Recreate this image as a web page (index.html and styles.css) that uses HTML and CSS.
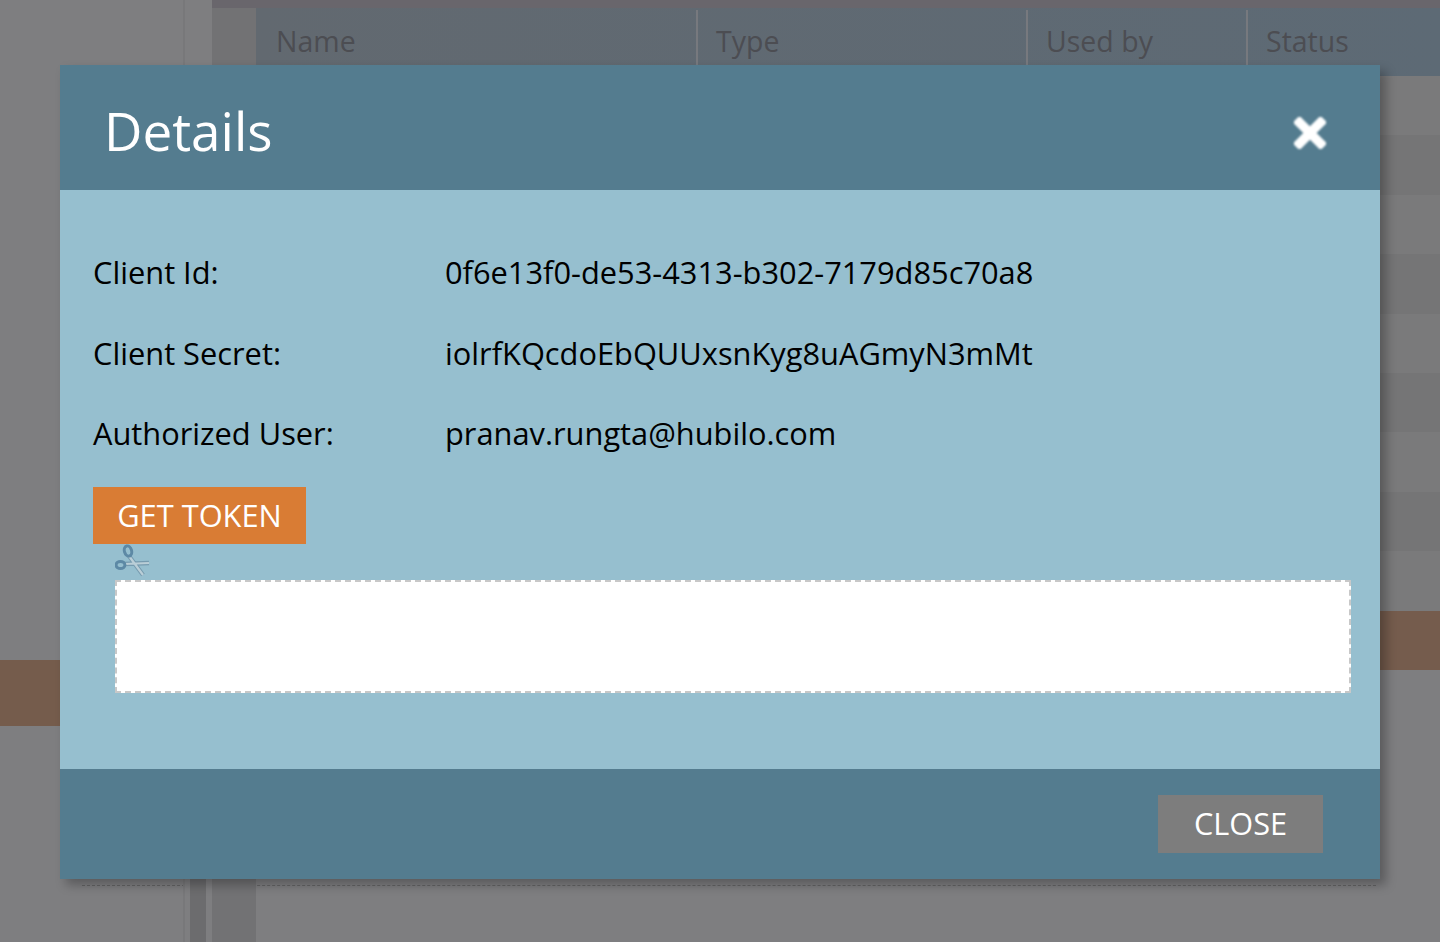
FILE: index.html
```html
<!DOCTYPE html>
<html lang="en">
<head>
<meta charset="utf-8">
<title>Details</title>
<link rel="stylesheet" href="styles.css">
</head>
<body>
<div class="page">
  <aside class="sidebar"><div class="sidebar-highlight"></div></aside>
  <div class="rail"><div class="rail-stripe"></div></div>
  <div class="gutter"></div>
  <main class="main">
    <div class="topbar"></div>
    <div class="table-head">
      <div class="th th-name">Name</div>
      <div class="th th-type">Type</div>
      <div class="th th-used">Used by</div>
      <div class="th th-status">Status</div>
    </div>
    <div class="rows">
      <div class="row"></div><div class="row alt"></div><div class="row"></div><div class="row alt"></div><div class="row"></div><div class="row alt"></div><div class="row"></div><div class="row alt"></div><div class="row"></div>
      <div class="row selected"></div>
    </div>
  </main>
</div>
<section class="modal">
  <header class="modal-head">
    <h1 class="modal-title">Details</h1>
    <svg class="close-icon" viewBox="0 0 32 32" aria-hidden="true"><path d="M5.5 5.5 26.5 26.5M26.5 5.5 5.5 26.5"/></svg>
  </header>
  <div class="modal-body">
    <dl class="info">
      <dt>Client Id:</dt><dd>0f6e13f0-de53-4313-b302-7179d85c70a8</dd>
      <dt>Client Secret:</dt><dd>iolrfKQcdoEbQUUxsnKyg8uAGmyN3mMt</dd>
      <dt>Authorized User:</dt><dd>pranav.rungta@hubilo.com</dd>
    </dl>
    <button class="btn-token" type="button">GET TOKEN</button>
    <svg class="scissors" viewBox="0 0 36 36" aria-hidden="true">
      <path class="blade" d="M14 12 28 31M9 20 34 19"/>
      <path class="blade-in" d="M14 12 28 31M9 20 34 19"/>
      <ellipse class="ring" cx="13" cy="7" rx="3.6" ry="5.2" transform="rotate(-15 13 7)"/>
      <ellipse class="ring" cx="5.5" cy="21" rx="4.4" ry="3.6"/>
    </svg>
    <div class="token-box"></div>
  </div>
  <footer class="modal-foot">
    <button class="btn-close" type="button">CLOSE</button>
  </footer>
</section>
</body>
</html>
```
FILE: styles.css
```css
* { box-sizing: border-box; }
html, body { margin: 0; height: 100%; }
body {
  width: 1440px;
  height: 942px;
  overflow: hidden;
  background: #7e7e80;
  font-family: "Open Sans", "Noto Sans", sans-serif;
  position: relative;
}
.page { display: flex; height: 942px; }
.sidebar {
  width: 183px;
  padding-top: 660px;
  flex: none;
}
.sidebar-highlight { height: 66px; background: #755c4c; }
.rail {
  width: 29px;
  flex: none;
  border-left: 2px solid #78787a;
  background: #7e7e80;
  padding: 800px 6px 0 5px;
}
.rail-stripe { height: 142px; background: #6c6c6e; }
.gutter { width: 44px; flex: none; background: #727274; }
.main { flex: 1; min-width: 0; }
.topbar { height: 8px; background: #69666c; margin-left: -44px; }
.table-head {
  display: grid;
  grid-template-columns: 440px 330px 220px 1fr;
  height: 68px;
  background: linear-gradient(90deg, #626970, #5d6a75);
  color: #4c4d52;
  font-size: 28.5px;
}
.th { margin-top: 2px; line-height: 62px; }
.th-name { padding-left: 20px; }
.th-type, .th-used, .th-status { border-left: 2px solid #77797e; padding-left: 18px; }
.rows { display: grid; grid-template-rows: repeat(10, 59.4px); }
.row { background: #7a7a7b; }
.row.alt { background: #757576; }
.row.selected { background: #755c4d; }

.modal {
  position: absolute;
  left: 60px;
  top: 65px;
  width: 1320px;
  height: 814px;
  display: flex;
  flex-direction: column;
  box-shadow: 6px 6px 10px rgba(0, 0, 0, .28);
}
.modal::after {
  content: "";
  position: absolute;
  left: 22px;
  right: 4px;
  bottom: -7px;
  border-top: 1px dashed #636365;
  z-index: -1;
}
.modal-head {
  height: 125px;
  flex: none;
  background: #547c8f;
  display: flex;
  align-items: center;
  justify-content: space-between;
  padding: 0 54px 0 44px;
}
.modal-title {
  margin: 6px 0 0;
  color: #fff;
  font-size: 53px;
  font-weight: 400;
  line-height: 1;
}
.close-icon { width: 32px; height: 32px; flex: none; margin-top: 11px; filter: blur(.8px); }
.close-icon path { fill: none; stroke: #fff; stroke-width: 9.5; stroke-linecap: square; }
.modal-body {
  flex: 1;
  background: #96bfcf;
  padding: 42px 29px 0 33px;
}
.info {
  display: grid;
  grid-template-columns: 352px 1fr;
  grid-auto-rows: 80.4px;
  align-items: center;
  margin: 0;
  color: #000;
  font-size: 30.8px;
}
.info dt, .info dd { margin: 0; font-weight: 400; }
.btn-token {
  display: block;
  width: 213px;
  height: 57px;
  margin-top: 13.8px;
  padding: 0 0 1px;
  border: 0;
  background: #d97c34;
  color: #fff;
  font: 400 30.8px "Open Sans", sans-serif;
}
.scissors { display: block; width: 36px; height: 36px; margin-left: 22px; opacity: .8; filter: blur(.7px); }
.scissors .blade { fill: none; stroke: #6f93a8; stroke-width: 4.4; }
.scissors .blade-in { fill: none; stroke: #c3d2da; stroke-width: 2.2; }
.scissors .ring { fill: none; stroke: #4f7c9b; stroke-width: 3; }
.token-box {
  height: 113px;
  margin-left: 22px;
  background: #fff;
  border: 2px dashed #c8c8c8;
}
.modal-foot {
  height: 110px;
  flex: none;
  background: #547c8f;
  display: flex;
  justify-content: flex-end;
  align-items: flex-start;
  padding: 26px 57px 0 0;
}
.btn-close {
  width: 165px;
  height: 58px;
  padding: 0 0 2px;
  border: 0;
  background: #7d7d7d;
  color: #fff;
  font: 400 30.7px "Open Sans", sans-serif;
}
```
